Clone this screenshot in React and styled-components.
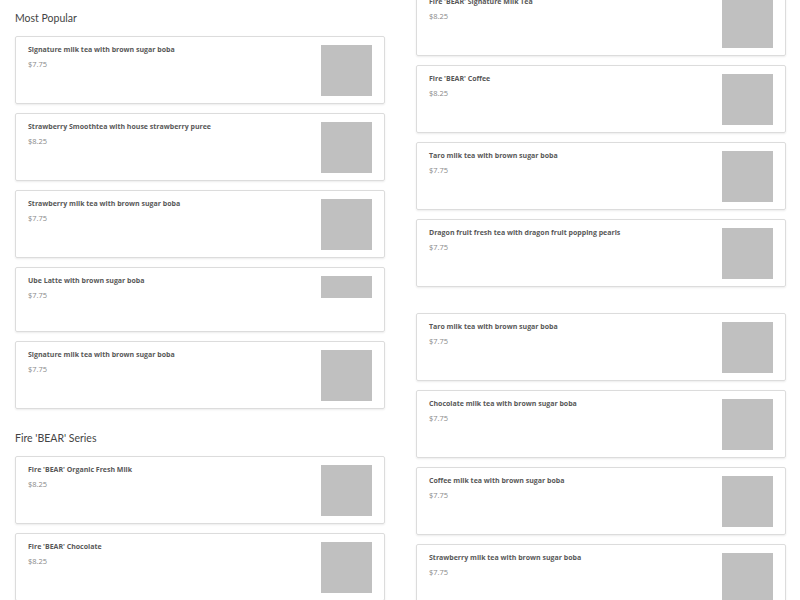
import React from 'react';
import styled, { createGlobalStyle } from 'styled-components';

const Global = createGlobalStyle`
  html, body {
    margin: 0;
    padding: 0;
    background: #fff;
    font-family: Lato, "Open Sans", sans-serif;
  }
`;

const Page = styled.div`
  width: 800px;
  height: 600px;
  overflow: hidden;
  box-sizing: border-box;
  padding: 0 15px;
  display: grid;
  grid-template-columns: 370px 370px;
  column-gap: 31px;
  align-items: start;
`;

const Column = styled.div`
  display: flex;
  flex-direction: column;
  gap: 9px;
  margin-top: ${p => p.$offset || 0}px;
`;

const Heading = styled.h2`
  margin: ${p => p.$space || 0}px 0 0;
  padding-top: 9px;
  font-size: 10.5px;
  line-height: 18px;
  font-weight: 400;
  color: #444;
`;

const Spacer = styled.div`
  height: 8px;
`;

const Card = styled.div`
  box-sizing: border-box;
  height: ${p => p.$h || 68}px;
  border: 1px solid #dcdcdc;
  border-radius: 2px;
  box-shadow: 0 1px 2px rgba(0, 0, 0, 0.08);
  padding: 8px 12px 7px 12px;
  display: flex;
  justify-content: space-between;
  align-items: flex-start;
`;

const Info = styled.div`
  display: flex;
  flex-direction: column;
  gap: 4px;
`;

const Title = styled.div`
  font-family: "Open Sans", Lato, sans-serif;
  font-size: 7px;
  line-height: 10px;
  font-weight: 700;
  color: #585858;
`;

const Price = styled.div`
  font-family: "Open Sans", Lato, sans-serif;
  font-size: 7.5px;
  line-height: 10px;
  color: #888;
`;

const Thumb = styled.div`
  width: 51px;
  height: ${p => p.$h || 51}px;
  background: #c0c0c0;
  flex-shrink: 0;
`;

const Item = ({ title, price, thumb, height }) => (
  <Card $h={height}>
    <Info>
      <Title>{title}</Title>
      <Price>{price}</Price>
    </Info>
    <Thumb $h={thumb} />
  </Card>
);

const left = [
  { type: 'h', text: 'Most Popular' },
  { title: 'Signature milk tea with brown sugar boba', price: '$7.75' },
  { title: 'Strawberry Smoothtea with house strawberry puree', price: '$8.25' },
  { title: 'Strawberry milk tea with brown sugar boba', price: '$7.75' },
  { title: 'Ube Latte with brown sugar boba', price: '$7.75', thumb: 22, height: 65 },
  { title: 'Signature milk tea with brown sugar boba', price: '$7.75' },
  { type: 'h', text: "Fire 'BEAR' Series", space: 2 },
  { title: "Fire 'BEAR' Organic Fresh Milk", price: '$8.25' },
  { title: "Fire 'BEAR' Chocolate", price: '$8.25' },
];

const right = [
  { title: "Fire 'BEAR' Signature Milk Tea", price: '$8.25' },
  { title: "Fire 'BEAR' Coffee", price: '$8.25' },
  { title: 'Taro milk tea with brown sugar boba', price: '$7.75' },
  { title: 'Dragon fruit fresh tea with dragon fruit popping pearls', price: '$7.75' },
  { type: 'gap' },
  { title: 'Taro milk tea with brown sugar boba', price: '$7.75' },
  { title: 'Chocolate milk tea with brown sugar boba', price: '$7.75' },
  { title: 'Coffee milk tea with brown sugar boba', price: '$7.75' },
  { title: 'Strawberry milk tea with brown sugar boba', price: '$7.75' },
];

const renderEntry = (e, i) => {
  if (e.type === 'h') return <Heading key={i} $space={e.space}>{e.text}</Heading>;
  if (e.type === 'gap') return <Spacer key={i} />;
  return <Item key={i} title={e.title} price={e.price} thumb={e.thumb} height={e.height} />;
};

const App = () => {
  return (
    <>
      <Global />
      <Page>
        <Column>{left.map(renderEntry)}</Column>
        <Column $offset={-12}>{right.map(renderEntry)}</Column>
      </Page>
    </>
  );
};

export default App;
